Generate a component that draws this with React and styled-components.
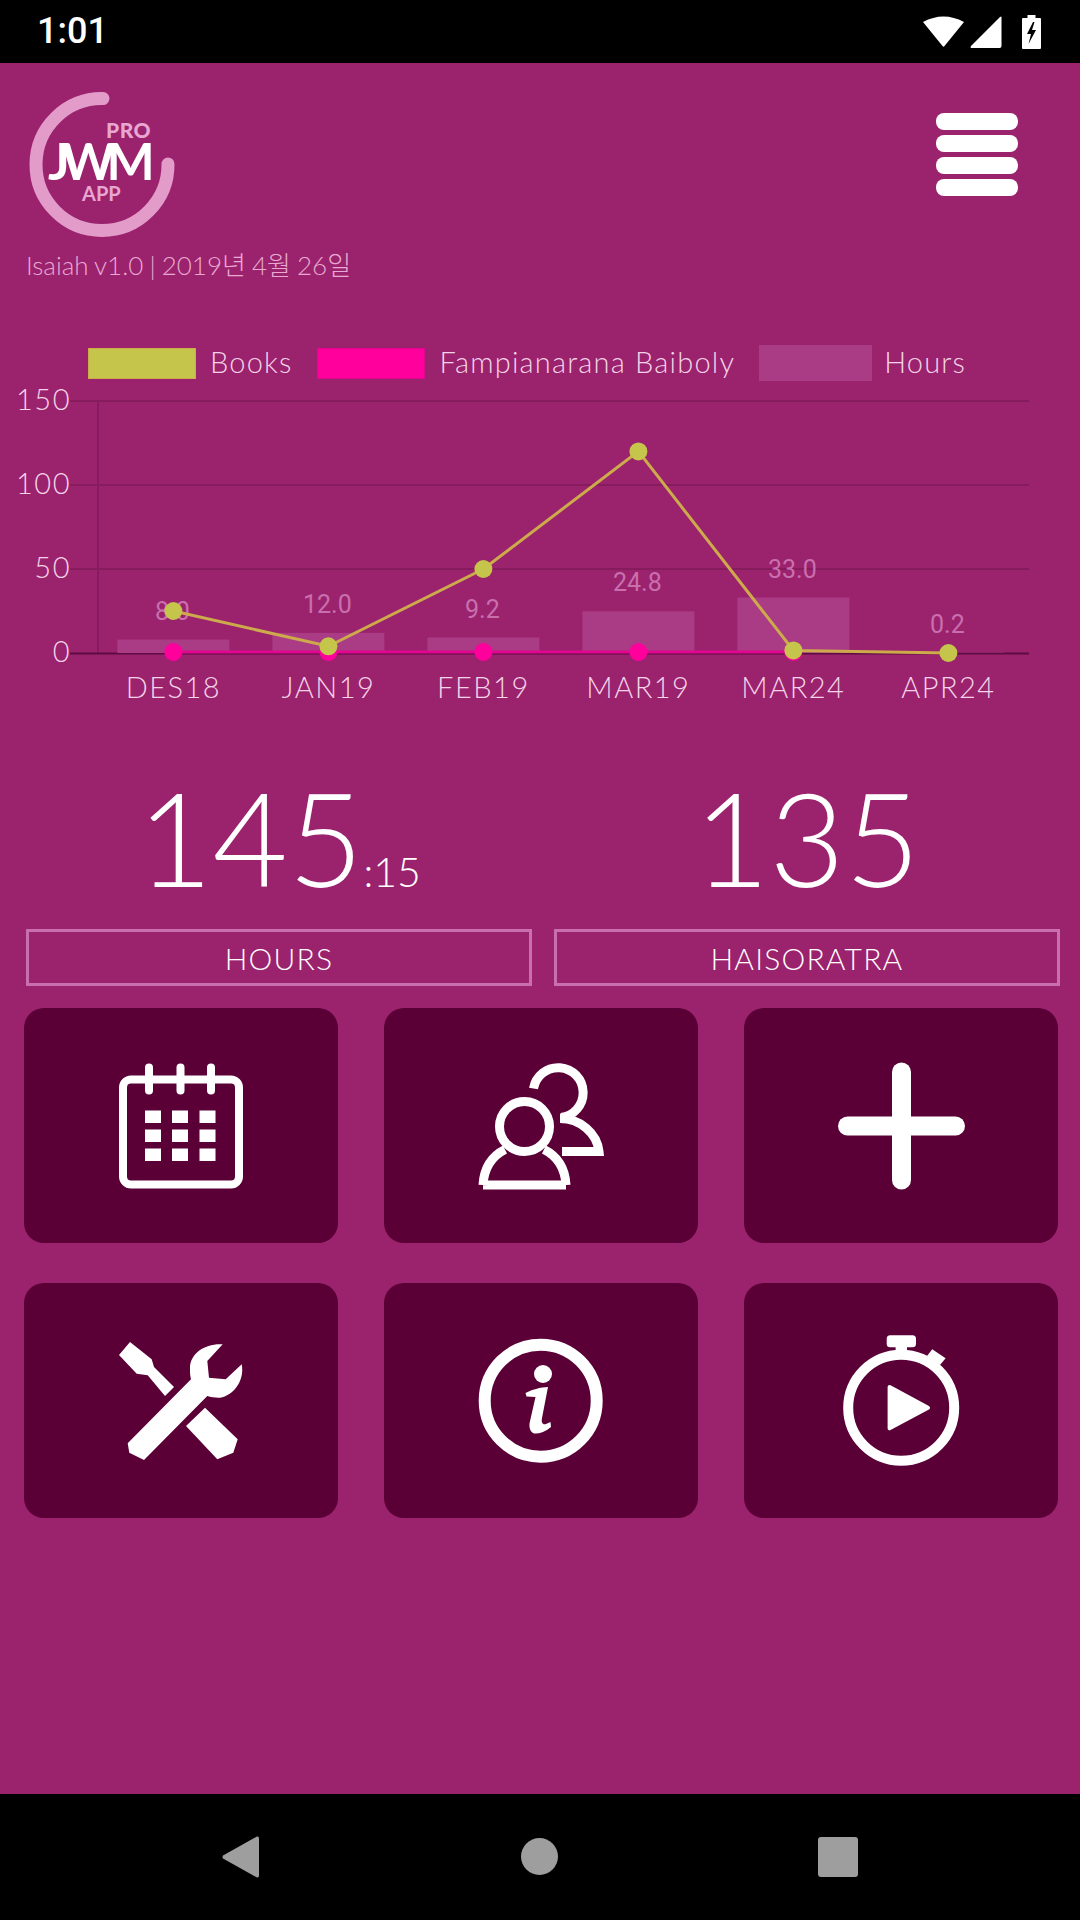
import React from 'react';
import styled, { createGlobalStyle } from 'styled-components';

const GlobalStyle = createGlobalStyle`
  html, body {
    margin: 0;
    padding: 0;
    background: #000;
  }
  * {
    box-sizing: border-box;
  }
`;

const Screen = styled.div`
  width: 1080px;
  height: 1920px;
  display: flex;
  flex-direction: column;
  font-family: Lato, "Noto Sans CJK KR", sans-serif;
  font-weight: 300;
  color: #fff;
  overflow: hidden;
`;

const StatusBar = styled.div`
  height: 63px;
  flex: none;
  background: #000;
  display: flex;
  align-items: center;
  justify-content: space-between;
  padding: 0 39px 0 37px;
`;

const Clock = styled.span`
  font-family: Roboto, sans-serif;
  font-size: 36px;
  font-weight: 500;
  line-height: 63px;
`;

const StatusIcons = styled.div`
  display: flex;
  align-items: center;
  gap: ${p => p.$gap || 0}px;
`;

const Main = styled.main`
  flex: 1;
  background: #9b226d;
  display: flex;
  flex-direction: column;
`;

const Header = styled.header`
  display: flex;
  justify-content: space-between;
  align-items: flex-start;
  padding: 22px 62px 0 22px;
`;

const Brand = styled.div`
  display: flex;
  flex-direction: column;
`;

const Version = styled.div`
  margin: 2px 0 0 4px;
  font-size: 26px;
  line-height: 36px;
  word-spacing: -1px;
  color: #e9a9d2;
`;

const Burger = styled.div`
  width: 82px;
  margin-top: 28px;
  display: flex;
  flex-direction: column;
  gap: 5.5px;
`;

const BurgerBar = styled.div`
  height: 16.5px;
  border-radius: 8px;
  background: #fff;
`;

const Legend = styled.div`
  display: flex;
  align-items: center;
  height: 36px;
  margin-top: 62px;
  padding-left: 88px;
  font-size: 29px;
  letter-spacing: 1.2px;
  color: #f4d3e8;
`;

const LegendItem = styled.div`
  display: flex;
  align-items: center;
  gap: ${p => p.$gap}px;
  margin-right: 24px;
`;

const LegendLabel = styled.span`
  position: relative;
  top: -2px;
`;

const Swatch = styled.span`
  display: block;
  width: ${p => p.$w}px;
  height: ${p => p.$h}px;
  background: ${p => p.$color};
  border: ${p => (p.$edge ? `1px solid ${p.$edge}` : 'none')};
`;

const ChartSvg = styled.svg`
  display: block;
  width: 1080px;
  height: 348px;
`;

const AxisText = styled.text`
  font-family: Lato, sans-serif;
  font-weight: 300;
  font-size: 29px;
  letter-spacing: 1.5px;
  fill: #f4d3e8;
`;

const ValueText = styled.text`
  font-family: Roboto, sans-serif;
  font-weight: 400;
  font-size: 25px;
  fill: #c96fae;
`;

const Stats = styled.section`
  display: grid;
  grid-template-columns: 506px 506px;
  gap: 22px;
  padding: 0 20px 0 26px;
  margin-top: 43px;
`;

const Stat = styled.div`
  display: flex;
  flex-direction: column;
`;

const StatValue = styled.div`
  height: 157px;
  display: flex;
  justify-content: center;
  align-items: baseline;
  font-size: 130px;
  line-height: 131px;
`;

const StatSuffix = styled.span`
  font-size: 41px;
  line-height: 41px;
`;

const StatLabel = styled.div`
  height: 57px;
  border: 3px solid #c96fae;
  display: flex;
  align-items: center;
  justify-content: center;
  font-size: 30px;
  letter-spacing: 1.2px;
`;

const Tiles = styled.section`
  display: grid;
  grid-template-columns: repeat(3, 314px);
  grid-auto-rows: 235px;
  gap: 40px 46px;
  padding-left: 24px;
  margin-top: 22px;
`;

const Tile = styled.div`
  background: #5a0036;
  border-radius: 20px;
  display: flex;
  align-items: center;
  justify-content: center;
`;

const NavBar = styled.nav`
  height: 126px;
  flex: none;
  background: #000;
  display: flex;
  align-items: center;
  justify-content: center;
  padding: 0 2px 1px 0;
`;

const NavSlot = styled.div`
  width: 299px;
  display: flex;
  justify-content: center;
`;

const NavCircle = styled.div`
  width: 37px;
  height: 37px;
  border-radius: 50%;
  background: #9e9e9e;
`;

const NavSquare = styled.div`
  width: 40px;
  height: 40px;
  border-radius: 3px;
  background: #9e9e9e;
`;

const categories = ['DES18', 'JAN19', 'FEB19', 'MAR19', 'MAR24', 'APR24'];
const hours = [8, 12, 9.2, 24.8, 33, 0.2];
const books = [25, 4, 50, 120, 1.5, 0];
const hourLabels = ['8.0', '12.0', '9.2', '24.8', '33.0', '0.2'];

const catX = i => 173.4 + i * 155;
const valY = v => 654 - v * 1.68;

const Chart = () => (
  <ChartSvg viewBox="0 382 1080 348">
    {[150, 100, 50].map(t => (
      <line key={t} x1="70" x2="1029" y1={valY(t)} y2={valY(t)} stroke="#861b5d" strokeWidth="2" />
    ))}
    <line x1="98" x2="98" y1="402" y2="654" stroke="#861b5d" strokeWidth="2" />
    <line x1="70" x2="1029" y1="654.5" y2="654.5" stroke="#5f0c43" strokeWidth="2" />
    {[150, 100, 50, 0].map(t => (
      <AxisText key={t} x="71" y={valY(t) + 9} textAnchor="end">{t}</AxisText>
    ))}
    {hours.map((h, i) => (
      <rect key={i} x={catX(i) - 56} y={valY(h)} width="112" height={h * 1.68} fill="#aa3c85" />
    ))}
    {hourLabels.map((l, i) => (
      <ValueText key={l} x={catX(i) - 1} y={valY(hours[i]) - 20} textAnchor="middle">{l}</ValueText>
    ))}
    <line x1={catX(0)} x2={catX(4)} y1="653" y2="653" stroke="#e0068f" strokeWidth="3" />
    {[0, 1, 2, 3, 4].map(i => (
      <circle key={i} cx={catX(i)} cy="653" r="9" fill="#ff009c" />
    ))}
    <polyline
      points={books.map((b, i) => `${catX(i)},${valY(b)}`).join(' ')}
      fill="none"
      stroke="#cdaa4c"
      strokeWidth="3"
    />
    {books.map((b, i) => (
      <circle key={i} cx={catX(i)} cy={valY(b)} r="9" fill="#c5c44b" />
    ))}
    {categories.map((c, i) => (
      <AxisText key={c} x={catX(i)} y="699" textAnchor="middle">{c}</AxisText>
    ))}
  </ChartSvg>
);

const Logo = () => (
  <svg width="160" height="160" viewBox="22 85 160 160">
    <path
      d="M103 98.5 A66 66 0 1 0 168 164"
      fill="none"
      stroke="#e39cc9"
      strokeWidth="13"
      strokeLinecap="round"
    />
    <text x="106" y="137.5" fontFamily="Lato, sans-serif" fontWeight="900" fontSize="21" fill="#e9a6d0" letterSpacing="0.5">PRO</text>
    <text x="48" y="180" fontFamily="Lato, sans-serif" fontWeight="700" fontSize="51" fill="#fff" letterSpacing="-8.5">JWM</text>
    <text x="82" y="201" fontFamily="Lato, sans-serif" fontWeight="700" fontSize="20" fill="#e9a6d0">APP</text>
  </svg>
);

const WifiIcon = () => (
  <svg width="41" height="32" viewBox="0 0 41 32">
    <path d="M0 6 Q20.5 -5 41 6 L21.5 30 Q20.5 31.5 19.5 30 Z" fill="#fff" />
  </svg>
);

const SignalIcon = () => (
  <svg width="32" height="32" viewBox="0 0 32 32">
    <path d="M31.5 1 V30 Q31.5 32 29.5 32 H1 Q0 31 1 30 L30 1 Q31.5 0 31.5 1 Z" fill="#fff" />
  </svg>
);

const BatteryIcon = () => (
  <svg width="19" height="34" viewBox="0 0 19 34">
    <path d="M5.5 0 H13.5 V3 H18 Q19 3 19 4 V33 Q19 34 18 34 H1 Q0 34 0 33 V4 Q0 3 1 3 H5.5 Z" fill="#fff" />
    <path d="M11 7 L5 19 H9 L6.5 29 L14 15 H10 L12.5 7 Z" fill="#000" />
  </svg>
);

const IconSvg = ({ children }) => (
  <svg width="140" height="140" viewBox="0 0 140 140" fill="#fff">{children}</svg>
);

const CalendarIcon = () => (
  <IconSvg>
    <rect x="12" y="23.5" width="116" height="105" rx="8" fill="none" stroke="#fff" strokeWidth="8" />
    {[38, 69.5, 100].map(x => (
      <line key={x} x1={x} x2={x} y1="11.5" y2="34.5" stroke="#fff" strokeWidth="8" strokeLinecap="round" />
    ))}
    {[54.5, 73.5, 92.5].map(y =>
      [34, 61, 88.5].map(x => <rect key={`${x}-${y}`} x={x} y={y} width="16" height="12.5" />)
    )}
  </IconSvg>
);

const PeopleIcon = () => (
  <IconSvg>
    <g fill="none" stroke="#fff" strokeWidth="9">
      <circle cx="53.5" cy="70.5" r="25" />
      <path d="M12 129 C13 112 21 100 34 93.5 M95 129 C94 112 86 100 73 93.5 M12 129 H95" />
      <path d="M62.5 32.5 A25 25 0 1 1 90 61.5" />
      <path d="M89 62.5 C109 62.5 126 77 128 95.5 H91" />
    </g>
  </IconSvg>
);

const PlusIcon = () => (
  <IconSvg>
    <g stroke="#fff" strokeWidth="19" strokeLinecap="round">
      <line x1="70.5" x2="70.5" y1="16" y2="124" />
      <line x1="16.5" x2="124.5" y1="70" y2="70" />
    </g>
  </IconSvg>
);

const ToolsIcon = () => (
  <IconSvg>
    <path d="M19 11 L8 24 L25.7 42.7 L36.7 44.3 L54 65 L63 56 L43 36 L40.7 28.3 Z" />
    <path d="M94 76.7 L75 95 L106.3 128.3 L122.3 121.7 L126.7 108.3 Z" />
    <path d="M111.7 13.3 C95 12 79 22 79 37 C79 42 79 45 80 48.3 L16.7 112.3 L18.3 121.7 L33 129 L96.3 65 C100 66 105 67 109 66.7 C122 65 134 50 130.7 33.3 L114.7 48.3 L98 46.7 L96.3 30 Z" />
  </IconSvg>
);

const InfoIcon = () => (
  <IconSvg>
    <circle cx="69.7" cy="69.7" r="56" fill="none" stroke="#fff" strokeWidth="12" />
    <circle cx="72" cy="43" r="9" />
    <path d="M54.5 62 C60 59 70 56 77 56 L71 87 C70 92 72 94 75 93 L79.5 91 L80 96 C74 101 68 103 63 102.5 C59 101 58 96 58.6 92 L64.5 66 L55.5 65.5 Z" />
  </IconSvg>
);

const TimerIcon = () => (
  <IconSvg>
    <circle cx="70.2" cy="76.7" r="53" fill="none" stroke="#fff" strokeWidth="10" />
    <rect x="55.7" y="4.3" width="29.3" height="12" rx="3.5" />
    <rect x="64.6" y="15" width="11.4" height="6" />
    <path d="M101.2 18.3 L114.6 27.3 L109 34 L96 25 Z" />
    <path d="M58.6 56 L97 76.7 L58.6 97.3 Z" stroke="#fff" strokeWidth="4" strokeLinejoin="round" />
  </IconSvg>
);

const tiles = [
  <CalendarIcon key="calendar" />,
  <PeopleIcon key="people" />,
  <PlusIcon key="plus" />,
  <ToolsIcon key="tools" />,
  <InfoIcon key="info" />,
  <TimerIcon key="timer" />
];

const App = () => (
  <Screen>
    <GlobalStyle />
    <StatusBar>
      <Clock>1:01</Clock>
      <StatusIcons $gap={20}>
        <StatusIcons $gap={6}>
          <WifiIcon />
          <SignalIcon />
        </StatusIcons>
        <BatteryIcon />
      </StatusIcons>
    </StatusBar>
    <Main>
      <Header>
        <Brand>
          <Logo />
          <Version>Isaiah v1.0 | 2019년 4월 26일</Version>
        </Brand>
        <Burger>
          <BurgerBar />
          <BurgerBar />
          <BurgerBar />
          <BurgerBar />
        </Burger>
      </Header>
      <Legend>
        <LegendItem $gap={14}>
          <Swatch $w={108} $h={31} $color="#c5c44b" $edge="#cdaa4c" />
          <LegendLabel>Books</LegendLabel>
        </LegendItem>
        <LegendItem $gap={15}>
          <Swatch $w={108} $h={31} $color="#ff009c" $edge="#e0068f" />
          <LegendLabel>Fampianarana Baiboly</LegendLabel>
        </LegendItem>
        <LegendItem $gap={12}>
          <Swatch $w={113} $h={36} $color="#aa3c85" />
          <LegendLabel>Hours</LegendLabel>
        </LegendItem>
      </Legend>
      <Chart />
      <Stats>
        <Stat>
          <StatValue>145<StatSuffix>:15</StatSuffix></StatValue>
          <StatLabel>HOURS</StatLabel>
        </Stat>
        <Stat>
          <StatValue>135</StatValue>
          <StatLabel>HAISORATRA</StatLabel>
        </Stat>
      </Stats>
      <Tiles>
        {tiles.map(icon => <Tile key={icon.key}>{icon}</Tile>)}
      </Tiles>
    </Main>
    <NavBar>
      <NavSlot>
        <svg width="37" height="42" viewBox="0 0 37 42">
          <path d="M35 0.5 Q37 0 37 2.5 V39.5 Q37 42 35 41.5 L1 22.5 Q0 21 1 19.5 Z" fill="#9e9e9e" />
        </svg>
      </NavSlot>
      <NavSlot><NavCircle /></NavSlot>
      <NavSlot><NavSquare /></NavSlot>
    </NavBar>
  </Screen>
);

export default App;
